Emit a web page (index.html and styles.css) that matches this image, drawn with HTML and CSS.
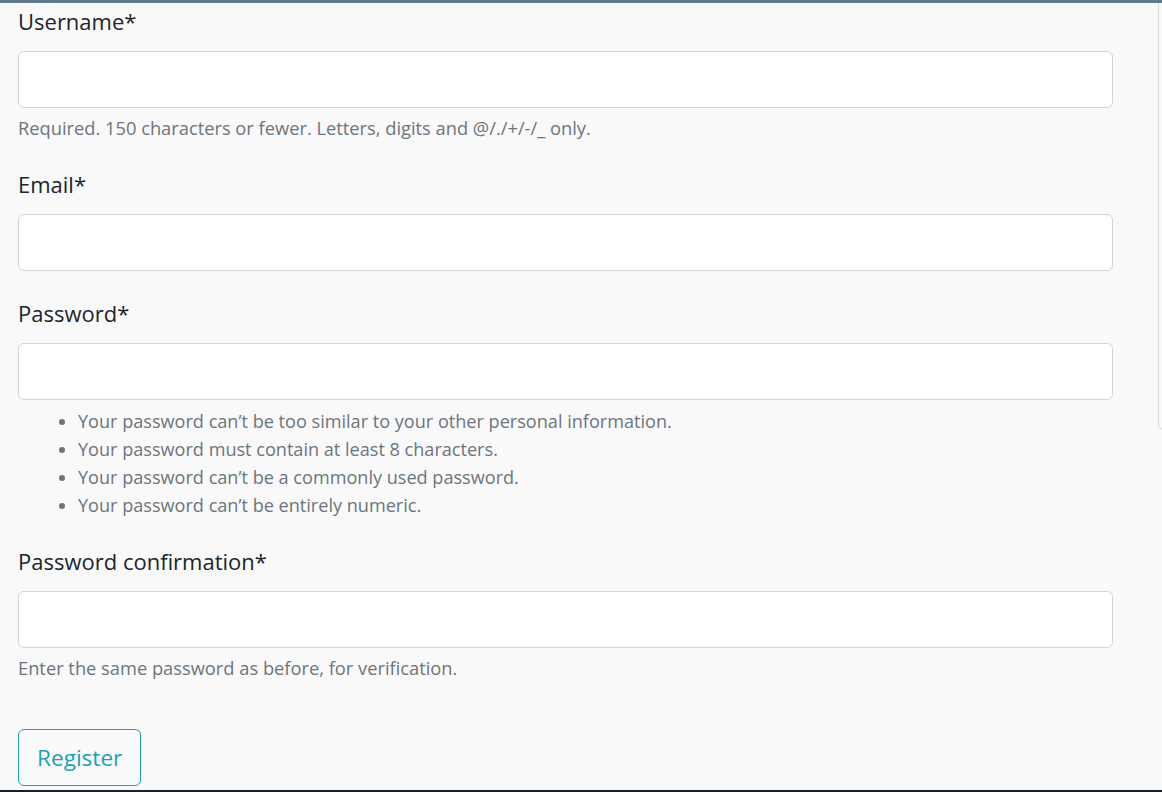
FILE: index.html
```html
<!DOCTYPE html>
<html lang="en">
<head>
<meta charset="utf-8">
<title>Register</title>
<link rel="stylesheet" href="styles.css">
</head>
<body>
<div class="topbar"></div>
<div class="side-card"></div>
<main class="page">
  <form class="register-form">
    <div class="form-group">
      <label class="form-label" for="id_username">Username*</label>
      <input class="form-control" type="text" id="id_username">
      <small class="form-text">Required. 150 characters or fewer. Letters, digits and @/./+/-/_ only.</small>
    </div>
    <div class="form-group">
      <label class="form-label" for="id_email">Email*</label>
      <input class="form-control" type="email" id="id_email">
    </div>
    <div class="form-group">
      <label class="form-label" for="id_password1">Password*</label>
      <input class="form-control" type="password" id="id_password1">
      <ul class="form-text help-list">
        <li>Your password can’t be too similar to your other personal information.</li>
        <li>Your password must contain at least 8 characters.</li>
        <li>Your password can’t be a commonly used password.</li>
        <li>Your password can’t be entirely numeric.</li>
      </ul>
    </div>
    <div class="form-group">
      <label class="form-label" for="id_password2">Password confirmation*</label>
      <input class="form-control" type="password" id="id_password2">
      <small class="form-text">Enter the same password as before, for verification.</small>
    </div>
    <button class="btn-outline-info" type="button">Register</button>
  </form>
</main>
<div class="bottombar"></div>
</body>
</html>
```
FILE: styles.css
```css
html, body {
  margin: 0;
  padding: 0;
  background: #f9f9f9;
}
body {
  font-family: "Open Sans", "Noto Sans", sans-serif;
  color: #212529;
  height: 792px;
  overflow: hidden;
}
.topbar {
  height: 3px;
  background: #5f7a8b;
}
.bottombar {
  position: fixed;
  left: 0;
  right: 0;
  bottom: 0;
  height: 2px;
  background: #1c1f2a;
}
.side-card {
  position: absolute;
  left: 1158px;
  top: 3px;
  width: 20px;
  height: 426px;
  border-left: 1px solid #d9d9d9;
  border-bottom: 1px solid #d9d9d9;
  border-bottom-left-radius: 6px;
}
.page {
  padding: 0 0 0 18px;
}
.register-form {
  width: 1095px;
  display: flex;
  flex-direction: column;
}
.form-group {
  display: flex;
  flex-direction: column;
  margin-bottom: 24px;
}
.form-label {
  font-size: 22px;
  line-height: 36px;
  margin-bottom: 12px;
}
.form-control {
  box-sizing: border-box;
  height: 57px;
  width: 100%;
  margin: 0;
  border: 1px solid #ced4da;
  border-radius: 6px;
  background: #fff;
  font: inherit;
}
.form-text {
  display: block;
  margin-top: 6px;
  font-size: 18.3px;
  line-height: 28px;
  color: #6c757d;
}
.help-list {
  margin: 7px 0 0 0;
  padding-left: 60px;
  font-size: 18.1px;
  line-height: 28px;
}
.help-list li::marker {
  color: #6c757d;
}
.btn-outline-info {
  align-self: flex-start;
  margin-top: 23px;
  height: 57px;
  padding: 0 18px;
  font-family: inherit;
  font-size: 22.6px;
  color: #17a2b8;
  background: transparent;
  border: 1px solid #17a2b8;
  border-radius: 6px;
}
```
